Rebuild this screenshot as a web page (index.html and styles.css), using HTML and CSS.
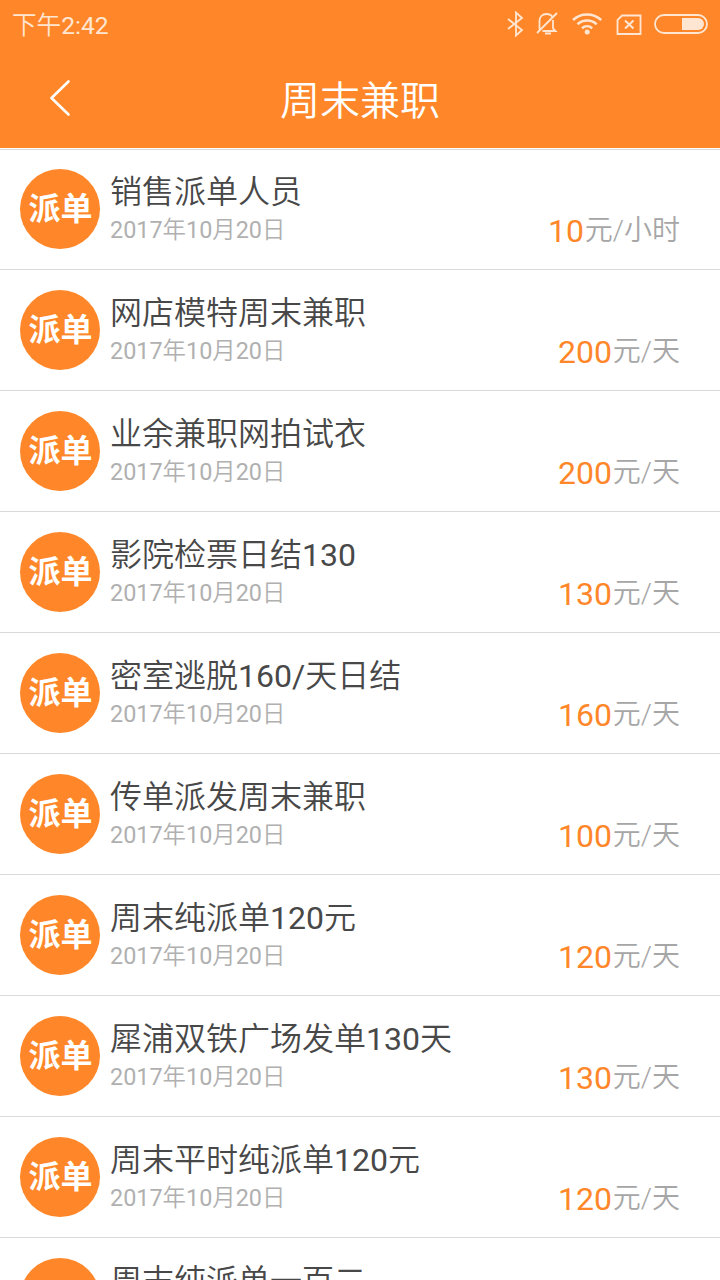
FILE: index.html
```html
<!DOCTYPE html>
<html lang="zh-CN">
<head>
<meta charset="utf-8">
<title>周末兼职</title>
<link rel="stylesheet" href="styles.css">
</head>
<body>
<header class="header">
  <div class="status">
    <span class="time">下午<span class="num">2:42</span></span>
    <svg class="status-icons" width="204" height="30" viewBox="0 0 204 30" fill="none" stroke="#ffe6d2" stroke-width="1.8">
      <path d="M4 9.500 18 20.500 12 26V3L18 8.500 4 19.500" transform="translate(0 1.500)"/>
      <path d="M35.500 20.500V12c0-4 2.500-7 7-7 3 0 5 1.300 6 3.200M49 11v8.500l2.500 2.500H38.500M33 24 53 4" transform="translate(0 1)"/>
      <path d="M41 25.500h6" stroke-width="2"/>
      <path d="M69 12c8-7.500 20-7.500 28.200 0M73.500 16.200c5.600-5 13.600-5 19.200 0M78 20.200c3-2.600 7.200-2.600 10.200 0" stroke-width="2.500"/>
      <circle cx="83.200" cy="24" r="2.500" fill="#ffe6d2" stroke="none"/>
      <path d="M118 7.500H136.500V26H113.500V12z"/>
      <path d="m121 12.500 8.500 8M129.500 12.500l-8.500 8" stroke-width="2"/>
      <rect x="151" y="7" width="52" height="18" rx="9"/>
      <path d="M178 10h16a6 6 0 0 1 0 12h-16z" fill="#ffe6d2" stroke="none"/>
    </svg>
  </div>
  <div class="navbar">
    <svg class="back" width="24" height="40" viewBox="0 0 24 40" fill="none" stroke="#fff" stroke-width="2.6" stroke-linecap="round" stroke-linejoin="round"><path d="M20.500 2.500 3.500 19l17 16.500"/></svg>
    <h1 class="heading">周末兼职</h1>
  </div>
</header>
<main class="list">
  <article class="job"><div class="badge">派单</div><div class="info"><h2 class="title">销售派单人员</h2><p class="date"><span class="num">2017</span>年<span class="num">10</span>月<span class="num">20</span>日</p></div><p class="pay"><b class="amount">10</b><span class="unit">元/小时</span></p></article>
  <article class="job"><div class="badge">派单</div><div class="info"><h2 class="title">网店模特周末兼职</h2><p class="date"><span class="num">2017</span>年<span class="num">10</span>月<span class="num">20</span>日</p></div><p class="pay"><b class="amount">200</b><span class="unit">元/天</span></p></article>
  <article class="job"><div class="badge">派单</div><div class="info"><h2 class="title">业余兼职网拍试衣</h2><p class="date"><span class="num">2017</span>年<span class="num">10</span>月<span class="num">20</span>日</p></div><p class="pay"><b class="amount">200</b><span class="unit">元/天</span></p></article>
  <article class="job"><div class="badge">派单</div><div class="info"><h2 class="title">影院检票日结<span class="num">130</span></h2><p class="date"><span class="num">2017</span>年<span class="num">10</span>月<span class="num">20</span>日</p></div><p class="pay"><b class="amount">130</b><span class="unit">元/天</span></p></article>
  <article class="job"><div class="badge">派单</div><div class="info"><h2 class="title">密室逃脱<span class="num">160/</span>天日结</h2><p class="date"><span class="num">2017</span>年<span class="num">10</span>月<span class="num">20</span>日</p></div><p class="pay"><b class="amount">160</b><span class="unit">元/天</span></p></article>
  <article class="job"><div class="badge">派单</div><div class="info"><h2 class="title">传单派发周末兼职</h2><p class="date"><span class="num">2017</span>年<span class="num">10</span>月<span class="num">20</span>日</p></div><p class="pay"><b class="amount">100</b><span class="unit">元/天</span></p></article>
  <article class="job"><div class="badge">派单</div><div class="info"><h2 class="title">周末纯派单<span class="num">120</span>元</h2><p class="date"><span class="num">2017</span>年<span class="num">10</span>月<span class="num">20</span>日</p></div><p class="pay"><b class="amount">120</b><span class="unit">元/天</span></p></article>
  <article class="job"><div class="badge">派单</div><div class="info"><h2 class="title">犀浦双铁广场发单<span class="num">130</span>天</h2><p class="date"><span class="num">2017</span>年<span class="num">10</span>月<span class="num">20</span>日</p></div><p class="pay"><b class="amount">130</b><span class="unit">元/天</span></p></article>
  <article class="job"><div class="badge">派单</div><div class="info"><h2 class="title">周末平时纯派单<span class="num">120</span>元</h2><p class="date"><span class="num">2017</span>年<span class="num">10</span>月<span class="num">20</span>日</p></div><p class="pay"><b class="amount">120</b><span class="unit">元/天</span></p></article>
  <article class="job"><div class="badge">派单</div><div class="info"><h2 class="title">周末纯派单一百二</h2></div></article>
</main>
</body>
</html>
```
FILE: styles.css
```css
* { box-sizing: border-box; margin: 0; padding: 0; }
body {
  height: 1280px;
  overflow: hidden;
  display: flex;
  flex-direction: column;
  background: #fff;
  font-family: Roboto, "Noto Sans CJK SC", sans-serif;
  font-weight: 350;
}
.header { flex: none; height: 148px; background: #ff8729; color: #fff; }
.status {
  height: 50px;
  padding: 0 12px;
  display: flex;
  justify-content: space-between;
  align-items: flex-start;
}
.time { font-size: 24.6px; line-height: 52px; color: #ffe6d2; }
.num { font-weight: 400; }
.status-icons { display: block; margin-top: 8px; }
.navbar {
  height: 98px;
  padding: 0 48px;
  display: grid;
  grid-template-columns: 24px 1fr 24px;
  align-items: center;
}
.heading { font-size: 40px; font-weight: 350; line-height: 60px; padding-top: 6px; text-align: center; }
.list { flex: 1; min-height: 0; overflow: hidden; margin-top: 1px; box-shadow: inset 0 1px #d9d9d9; }
.job {
  height: 121px;
  padding: 20px 40px 20px 20px;
  display: flex;
  border-bottom: 1px solid #d9d9d9;
}
.badge {
  flex: none;
  width: 80px;
  height: 80px;
  border-radius: 50%;
  background: #ff8729;
  color: #fff;
  font-size: 32px;
  font-weight: 700;
  line-height: 81px;
  padding-left: 1px;
  text-align: center;
}
.info { flex: 1; padding-left: 10px; }
.title { font-size: 32px; font-weight: 350; line-height: 46px; color: #484848; white-space: nowrap; }
.date { font-size: 23.4px; line-height: 30px; color: #b0b0b0; }
.pay { display: flex; align-items: flex-end; white-space: nowrap; }
.amount { font-size: 32px; font-weight: 400; line-height: 36px; margin-right: 1px; color: #ff8729; }
.unit { font-size: 28px; line-height: 36px; color: #a6a6a6; }
```
